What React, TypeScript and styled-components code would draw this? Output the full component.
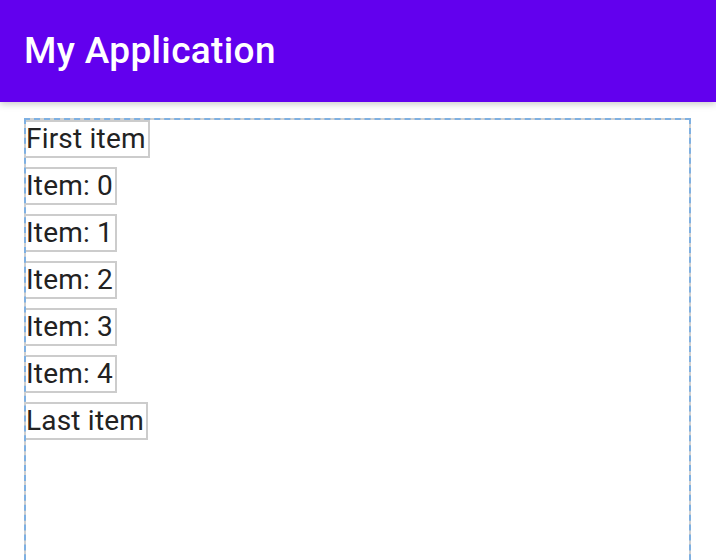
import styled, { createGlobalStyle } from 'styled-components';

const GlobalStyle = createGlobalStyle`
  html, body {
    margin: 0;
    padding: 0;
    background: #ffffff;
    font-family: Roboto, "Noto Sans", sans-serif;
    overflow: hidden;
  }
`;

const Screen = styled.div`
  width: 716px;
  height: 560px;
  display: flex;
  flex-direction: column;
  overflow: hidden;
`;

const AppBar = styled.header`
  height: 102px;
  flex-shrink: 0;
  display: flex;
  align-items: center;
  padding: 0 24px;
  background: #6200ee;
  box-shadow: 0 2px 7px rgba(0, 0, 0, 0.22);
  position: relative;
  z-index: 1;
`;

const Title = styled.h1`
  margin: 0 0 2px;
  color: #ffffff;
  font-size: 37px;
  font-weight: 500;
  letter-spacing: 0.35px;
`;

const Body = styled.main`
  flex: 1;
  padding: 16px 25px 0 24px;
`;

// Layout-bounds style frame: blue dashes over grey gaps
const ListFrame = styled.div`
  min-height: 480px;
  border: 2px dashed #7eb0e2;
  border-bottom: 0;
  background: linear-gradient(#ffffff, #ffffff) padding-box, #cfcfcf border-box;
  display: flex;
  flex-direction: column;
  align-items: flex-start;
  gap: 9px;
`;

const Item = styled.div`
  font-size: 28px;
  line-height: 34px;
  letter-spacing: 0.2px;
  color: #222222;
  border: 2px solid #cccccc;
  border-left: 0;
  padding-right: 2px;
`;

const items = ['First item', ...[0, 1, 2, 3, 4].map((i) => `Item: ${i}`), 'Last item'];

export default function App() {
  return (
    <>
      <GlobalStyle />
      <Screen>
        <AppBar>
          <Title>My Application</Title>
        </AppBar>
        <Body>
          <ListFrame>
            {items.map((label) => (
              <Item key={label}>{label}</Item>
            ))}
          </ListFrame>
        </Body>
      </Screen>
    </>
  );
}
